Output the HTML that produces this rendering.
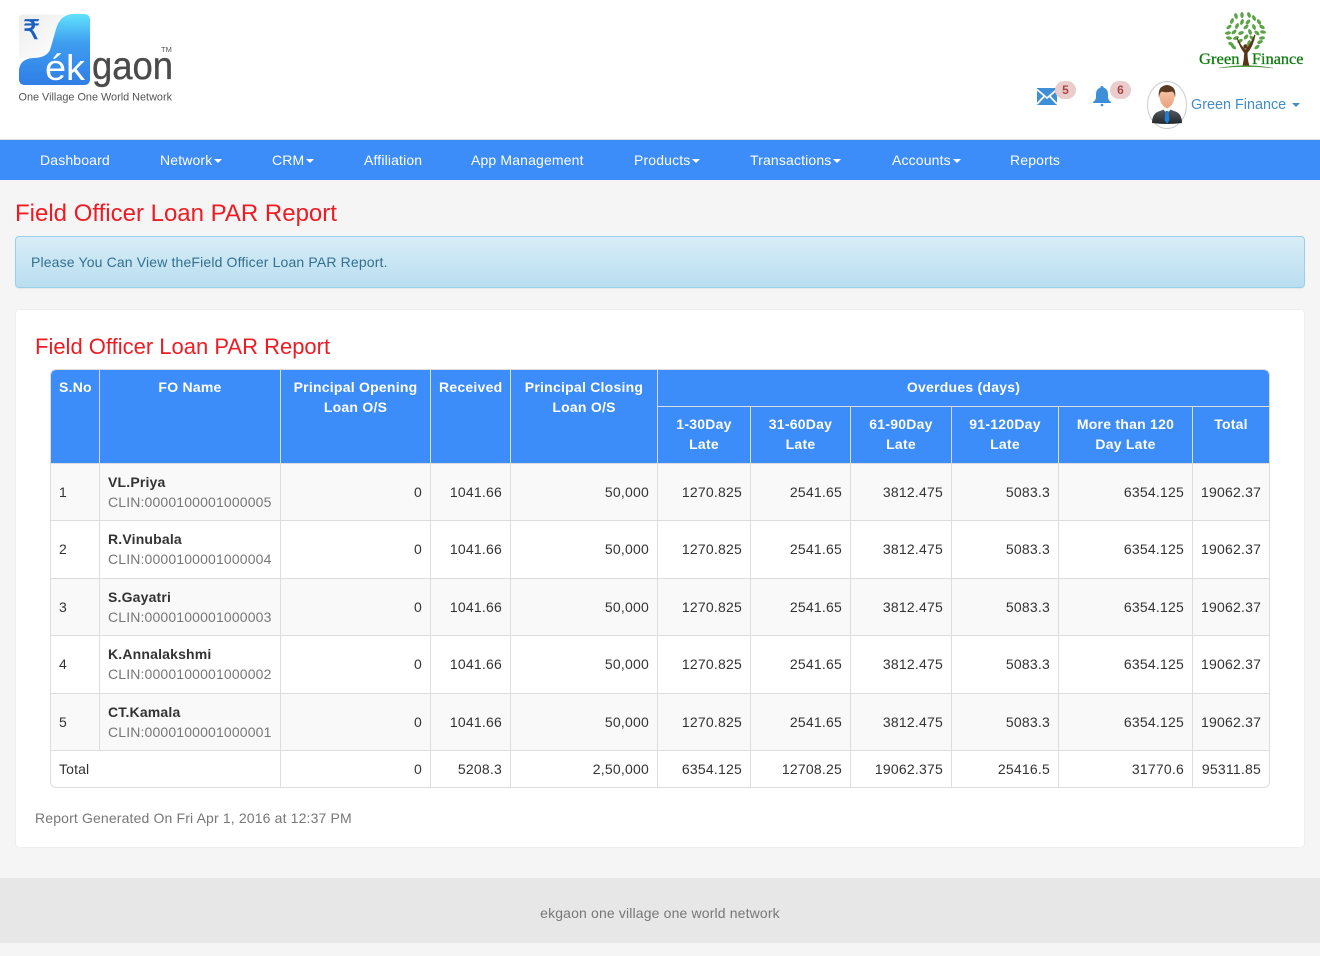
<!DOCTYPE html>
<html><head><meta charset="utf-8"><title>Field Officer Loan PAR Report</title>
<style>
*{box-sizing:border-box}
html,body{margin:0;padding:0}
body{width:1320px;height:956px;position:relative;overflow:hidden;background:#f5f5f5;font:14px/20px "Liberation Sans",sans-serif;color:#333;letter-spacing:.15px}
.abs{position:absolute}
#hdr{left:0;top:0;width:1320px;height:140px;background:#fff;border-bottom:1px solid #e0e0e0}
#nav{left:0;top:140px;width:1320px;height:40px;background:#3c8cfa}
#nav span{position:absolute;top:10px;color:#fff;white-space:nowrap}
#nav i{display:inline-block;width:0;height:0;margin-left:2px;vertical-align:middle;border-top:4px solid #fff;border-left:4px solid transparent;border-right:4px solid transparent}
h1,h2{position:absolute;margin:0;font-weight:400;color:#ed1c24;white-space:nowrap;letter-spacing:0}
h1{left:15px;top:199px;font-size:24px;line-height:30px}
h2{left:35px;top:332px;font-size:22px;line-height:30px}
#alert{left:15px;top:236px;width:1290px;height:52px;border:1px solid #9acfea;border-radius:4px;background:linear-gradient(#d9edf7,#b9def0);color:#31708f;padding:15px;box-shadow:0 1px 1px rgba(0,0,0,.05)}
#panel{left:15px;top:309px;width:1290px;height:539px;background:#fff;border:1px solid #eee;border-radius:4px}
#wrap{left:50px;top:369px;width:1220px;height:419px;border:1px solid #ddd;border-radius:6px;overflow:hidden;background:#fff}
table{border-collapse:separate;border-spacing:0;table-layout:fixed;width:1218px}
th,td{padding:0 8px;border-right:1px solid #ddd;border-bottom:1px solid #ddd;line-height:20px}
tr>:last-child{border-right:0}
th{background:#3c8cfa;color:#fff;border-color:#ddd;vertical-align:top;padding-top:7px;text-align:center;font-weight:700;letter-spacing:.24px}
td{vertical-align:middle;text-align:right;letter-spacing:.22px}
td.l{text-align:left;letter-spacing:.15px}
.o td{background:#f9f9f9}
.up td{padding-bottom:2px}
.ft td{border-bottom:0}
b{display:block;color:#333;letter-spacing:.18px}
small{display:block;font-size:14px;color:#777;letter-spacing:.15px}
#gen{left:35px;top:808px;color:#777}
#foot{left:0;top:878px;width:1320px;height:65px;background:#e7e7e7;text-align:center;color:#777;padding-top:25px}
.badge{position:absolute;width:21px;height:18px;border-radius:9px;background:#ebcccc;color:#a94442;font-size:12px;font-weight:700;line-height:18px;text-align:center;letter-spacing:0}
svg{position:absolute;overflow:visible;letter-spacing:0}
</style></head><body>
<div id="hdr" class="abs"></div>

<svg style="left:0;top:0" width="200" height="120" viewBox="0 0 200 120">
<defs>
<linearGradient id="bl" x1="0.5" y1="0" x2="0.5" y2="1"><stop offset="0" stop-color="#62e2fc"/><stop offset=".4" stop-color="#3f9ef0"/><stop offset="1" stop-color="#2f7ee6"/></linearGradient>
<linearGradient id="pg" x1="0" y1="0" x2="1" y2="1"><stop offset="0" stop-color="#ececec"/><stop offset=".5" stop-color="#f6f6f6"/><stop offset="1" stop-color="#ffffff"/></linearGradient>
<linearGradient id="sk" x1="0" y1="0" x2="0" y2="1"><stop offset="0" stop-color="#f7c6a6"/><stop offset="1" stop-color="#e9a17d"/></linearGradient>
<linearGradient id="su" x1="0" y1="0" x2="0" y2="1"><stop offset="0" stop-color="#5a6068"/><stop offset="1" stop-color="#23272c"/></linearGradient>
</defs>
<path d="M23 14.500H66Q56 22 53 38L46 58H19V18.500Q19 14.500 23 14.500Z" fill="url(#pg)"/>
<path d="M25 85Q19 85 19 79V70Q20 59 33 58Q46 58 50 50Q53 40 56 29Q60 15 72 14H84Q90 14 90 20V79Q90 85 84 85Z" fill="url(#bl)"/>
<text x="23" y="39" font-family="Liberation Sans,DejaVu Sans,sans-serif" font-size="27" fill="#1a5fc0" stroke="#1a5fc0" stroke-width=".5">₹</text>
<text x="45" y="80" font-family="Liberation Sans,sans-serif" font-size="36" fill="#fff" textLength="40" lengthAdjust="spacingAndGlyphs">ék</text>
<text x="92" y="79" font-family="Liberation Sans,sans-serif" font-size="39" fill="#4b4b4b" stroke="#4b4b4b" stroke-width=".35" textLength="81" lengthAdjust="spacingAndGlyphs">gaon</text>
<text x="161" y="52" font-family="Liberation Sans,sans-serif" font-size="7.5" fill="#555">TM</text>
<text x="18.500" y="100.500" font-family="Liberation Sans,sans-serif" font-size="11" fill="#555" textLength="153.500" lengthAdjust="spacingAndGlyphs">One Village One World Network</text>
</svg>

<svg style="left:1180px;top:0" width="140" height="75" viewBox="0 0 140 75">
<g fill="#5aa346">
<ellipse cx="56" cy="16" rx="1.700" ry="3" transform="rotate(-15 56 16)"/><ellipse cx="62" cy="15" rx="1.700" ry="3"/><ellipse cx="69" cy="15" rx="1.700" ry="3" transform="rotate(-20 69 15)"/><ellipse cx="74" cy="18" rx="1.700" ry="3" transform="rotate(-25 74 18)"/>
<ellipse cx="52" cy="21" rx="1.700" ry="3" transform="rotate(20 52 21)"/><ellipse cx="62" cy="22" rx="1.700" ry="3" transform="rotate(20 62 22)"/><ellipse cx="68" cy="22" rx="1.700" ry="3" transform="rotate(40 68 22)"/><ellipse cx="79" cy="22" rx="1.700" ry="3" transform="rotate(-30 79 22)"/>
<ellipse cx="49" cy="27" rx="1.700" ry="3" transform="rotate(50 49 27)"/><ellipse cx="57" cy="26" rx="1.700" ry="3" transform="rotate(20 57 26)"/><ellipse cx="66" cy="27" rx="1.700" ry="3" transform="rotate(50 66 27)"/><ellipse cx="74" cy="27" rx="1.700" ry="3" transform="rotate(-20 74 27)"/><ellipse cx="82" cy="27" rx="1.700" ry="3" transform="rotate(-60 82 27)"/>
<ellipse cx="48" cy="33" rx="1.700" ry="3" transform="rotate(80 48 33)"/><ellipse cx="54" cy="32" rx="1.700" ry="3" transform="rotate(50 54 32)"/><ellipse cx="61" cy="33" rx="1.700" ry="3" transform="rotate(70 61 33)"/><ellipse cx="70" cy="32" rx="1.700" ry="3" transform="rotate(-20 70 32)"/><ellipse cx="77" cy="33" rx="1.700" ry="3" transform="rotate(-50 77 33)"/><ellipse cx="83" cy="32" rx="1.700" ry="3" transform="rotate(-80 83 32)"/>
<ellipse cx="49" cy="38" rx="1.700" ry="3" transform="rotate(100 49 38)"/><ellipse cx="56" cy="38" rx="1.700" ry="3" transform="rotate(70 56 38)"/><ellipse cx="66" cy="37" rx="1.700" ry="3" transform="rotate(40 66 37)"/><ellipse cx="72" cy="38" rx="1.700" ry="3" transform="rotate(-50 72 38)"/><ellipse cx="82" cy="38" rx="1.700" ry="3" transform="rotate(-100 82 38)"/>
<ellipse cx="51" cy="44" rx="1.700" ry="3" transform="rotate(120 51 44)"/><ellipse cx="60" cy="41" rx="1.700" ry="3" transform="rotate(60 60 41)"/><ellipse cx="69" cy="43" rx="1.700" ry="3" transform="rotate(20 69 43)"/><ellipse cx="80" cy="42" rx="1.700" ry="3" transform="rotate(-110 80 42)"/>
<ellipse cx="53.500" cy="47" rx="1.700" ry="3" transform="rotate(130 53.500 47)"/><ellipse cx="77" cy="47" rx="1.700" ry="3" transform="rotate(-130 77 47)"/>
</g>
<path d="M62.500 66Q64 60 64.200 53Q60 48 56.500 38L57.500 37.700Q61 46 65.500 49.500Q70 45 74.500 34.500L75.500 35Q73 47 67.500 53Q67.500 60 69.500 66Z" fill="#5a3416"/>
<circle cx="65.500" cy="46.500" r="2.200" fill="#5a3416"/>
<path d="M39 68Q66 63 93 68Q66 65.300 39 68Z" fill="#3f8f2f" stroke="#3f8f2f" stroke-width=".3"/>
<text x="19" y="64" font-family="Liberation Serif,serif" font-size="15.500" fill="#0b7a0b" stroke="#0b7a0b" stroke-width=".25" textLength="40.500" lengthAdjust="spacingAndGlyphs">Green</text>
<text x="72" y="64" font-family="Liberation Serif,serif" font-size="15.500" fill="#0b7a0b" stroke="#0b7a0b" stroke-width=".25" textLength="51.500" lengthAdjust="spacingAndGlyphs">Finance</text>
</svg>

<svg style="left:1037px;top:88px" width="20" height="17" viewBox="0 0 20 17">
<path d="M0 0H20V17H0Z" fill="#3f8fd8"/>
<path d="M0 1.500L10 10L20 1.500M0 16L7.500 8M20 16L12.500 8" fill="none" stroke="#fff" stroke-width="1.700"/>
</svg>
<div class="badge" style="left:1055px;top:81px">5</div>
<svg style="left:1093px;top:86px" width="18" height="20" viewBox="0 0 18 20">
<path d="M9 0Q10.500 0 10.500 1.500Q15 3 15 8V11Q15 14 18 16V17H0V16Q3 14 3 11V8Q3 3 7.500 1.500Q7.500 0 9 0Z" fill="#3f8fd8"/>
<circle cx="9" cy="19" r="1.300" fill="#3f8fd8"/>
</svg>
<div class="badge" style="left:1110px;top:81px">6</div>

<svg style="left:1147px;top:81px" width="40" height="48" viewBox="0 0 40 48">
<ellipse cx="20" cy="24" rx="19.500" ry="23.500" fill="#fff" stroke="#ccc"/>
<path d="M5 42Q5 32 13 30L20 27L27 30Q35 32 35 42Q20 44 5 42Z" fill="url(#su)"/>
<path d="M16 28L20 33L24 28L22 26H18Z" fill="#fff"/>
<path d="M18.500 30H21.500L22.500 39L20 43L17.500 39Z" fill="#1d7fd6"/>
<path d="M12.500 14Q12.500 8 20 8Q27.500 8 27.500 14Q27.500 24 20 27.500Q12.500 24 12.500 14Z" fill="url(#sk)"/>
<path d="M12 17Q10 5 20 4Q30 5 28 17Q27.500 11 25 10.500Q19 12 15 10.500Q12.500 11 12 17Z" fill="#5a3a22"/>
</svg>
<div class="abs" style="left:1191px;top:95px;font-size:14.400px;line-height:21px;letter-spacing:0;color:#428bca;white-space:nowrap">Green Finance</div>
<div class="abs" style="left:1292px;top:103px;width:0;height:0;border-top:4px solid #428bca;border-left:4px solid transparent;border-right:4px solid transparent"></div>

<div id="nav" class="abs">
<span style="left:40px">Dashboard</span>
<span style="left:160px">Network<i></i></span>
<span style="left:272px">CRM<i></i></span>
<span style="left:364px">Affiliation</span>
<span style="left:471px">App Management</span>
<span style="left:634px">Products<i></i></span>
<span style="left:750px">Transactions<i></i></span>
<span style="left:892px">Accounts<i></i></span>
<span style="left:1010px">Reports</span>
</div>

<h1>Field Officer Loan PAR Report</h1>
<div id="alert" class="abs">Please You Can View theField Officer Loan PAR Report.</div>
<div id="panel" class="abs"></div>
<h2>Field Officer Loan PAR Report</h2>

<div id="wrap" class="abs">
<table>
<colgroup><col style="width:49px"><col style="width:181px"><col style="width:150px"><col style="width:80px"><col style="width:147px"><col style="width:93px"><col style="width:100px"><col style="width:101px"><col style="width:107px"><col style="width:134px"><col style="width:76px"></colgroup>
<tr style="height:37px">
<th rowspan="2">S.No</th><th rowspan="2">FO Name</th><th rowspan="2">Principal Opening Loan O/S</th><th rowspan="2">Received</th><th rowspan="2">Principal Closing Loan O/S</th><th colspan="6">Overdues (days)</th>
</tr>
<tr style="height:57px">
<th>1-30Day Late</th><th>31-60Day Late</th><th>61-90Day Late</th><th>91-120Day Late</th><th>More than 120 Day Late</th><th>Total</th>
</tr>
<tr class="o" style="height:57px"><td class="l">1</td><td class="l"><b>VL.Priya</b><small>CLIN:0000100001000005</small></td><td>0</td><td>1041.66</td><td>50,000</td><td>1270.825</td><td>2541.65</td><td>3812.475</td><td>5083.3</td><td>6354.125</td><td>19062.37</td></tr>
<tr class="up" style="height:58px"><td class="l">2</td><td class="l"><b>R.Vinubala</b><small>CLIN:0000100001000004</small></td><td>0</td><td>1041.66</td><td>50,000</td><td>1270.825</td><td>2541.65</td><td>3812.475</td><td>5083.3</td><td>6354.125</td><td>19062.37</td></tr>
<tr class="o" style="height:57px"><td class="l">3</td><td class="l"><b>S.Gayatri</b><small>CLIN:0000100001000003</small></td><td>0</td><td>1041.66</td><td>50,000</td><td>1270.825</td><td>2541.65</td><td>3812.475</td><td>5083.3</td><td>6354.125</td><td>19062.37</td></tr>
<tr class="up" style="height:58px"><td class="l">4</td><td class="l"><b>K.Annalakshmi</b><small>CLIN:0000100001000002</small></td><td>0</td><td>1041.66</td><td>50,000</td><td>1270.825</td><td>2541.65</td><td>3812.475</td><td>5083.3</td><td>6354.125</td><td>19062.37</td></tr>
<tr class="o" style="height:57px"><td class="l">5</td><td class="l"><b>CT.Kamala</b><small>CLIN:0000100001000001</small></td><td>0</td><td>1041.66</td><td>50,000</td><td>1270.825</td><td>2541.65</td><td>3812.475</td><td>5083.3</td><td>6354.125</td><td>19062.37</td></tr>
<tr class="ft" style="height:36px"><td class="l" colspan="2">Total</td><td>0</td><td>5208.3</td><td>2,50,000</td><td>6354.125</td><td>12708.25</td><td>19062.375</td><td>25416.5</td><td>31770.6</td><td>95311.85</td></tr>
</table>
</div>

<div id="gen" class="abs">Report Generated On Fri Apr 1, 2016 at 12:37 PM</div>
<div id="foot" class="abs">ekgaon one village one world network</div>
</body></html>
